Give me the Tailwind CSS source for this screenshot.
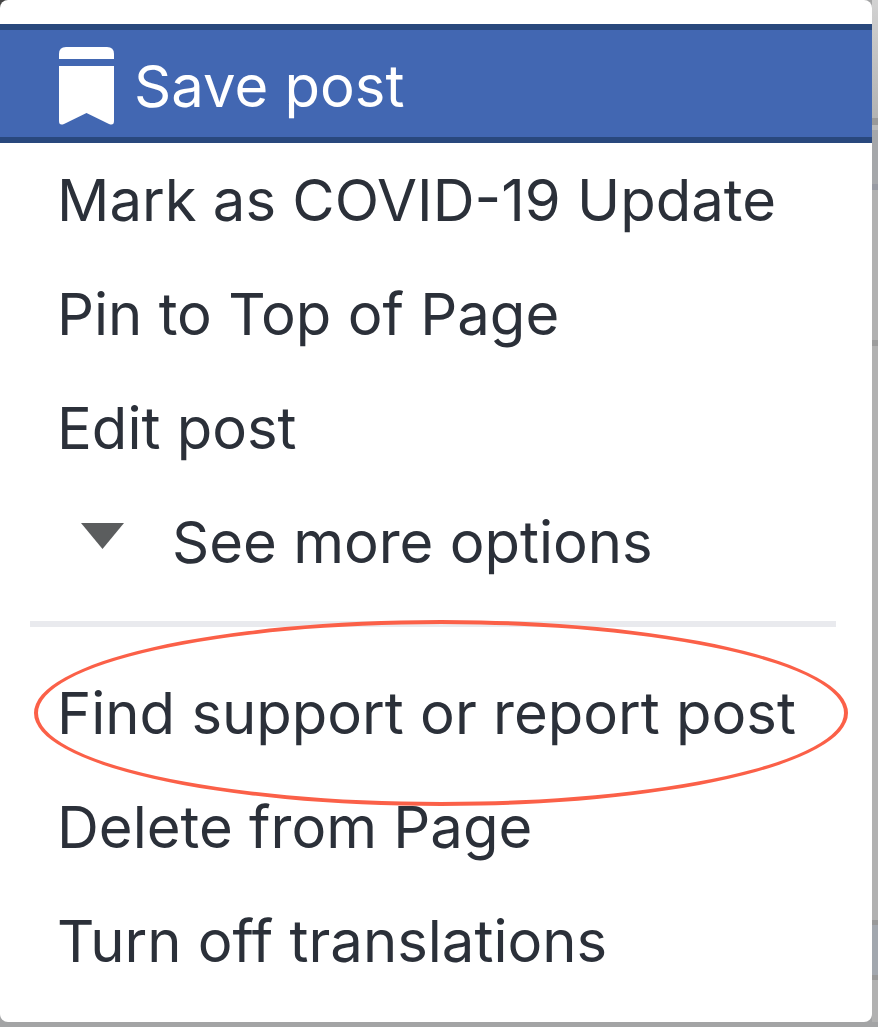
<!DOCTYPE html>
<html lang="en">
<head>
    <meta charset="UTF-8">
    <meta name="viewport" content="width=device-width, initial-scale=1.0">
    <title>Post options</title>
    <script src="https://cdn.jsdelivr.net/npm/@tailwindcss/browser@4"></script>
</head>
<body class="flex min-h-screen flex-col overflow-x-hidden bg-[#a3a4a5] font-['Inter','Liberation_Sans',sans-serif] text-[58px] leading-none text-[#2b3039]">
    <!-- Page corner behind the menu -->
    <div class="absolute top-0 left-0 h-2 w-2 rounded-br-full bg-[#444444]"></div>

    <div class="flex">
        <!-- Post menu -->
        <main class="relative flex min-w-0 grow flex-col rounded-lg bg-white pt-6 pb-6">
            <button type="button" class="flex h-[119px] items-center border-t-[6px] border-b-[6px] border-[#29487d] bg-[#4267b2] pt-1 pl-[59px] text-left text-white">
                <svg class="mr-5 h-[79px] w-[55px] shrink-0" viewBox="0 0 55 79" fill="currentColor" aria-hidden="true">
                    <path d="M0 13V8Q0 1 7 1H48Q55 1 55 8V13Z"/>
                    <path d="M0 20H55V75Q55 80 50 78L27.500 67L5 78Q0 80 0 75Z"/>
                </svg>
                <span class="whitespace-nowrap">Save post</span>
            </button>
            <button type="button" class="flex h-[114px] items-center pl-[57px] text-left whitespace-nowrap">Mark as COVID-19 Update</button>
            <button type="button" class="flex h-[114px] items-center pl-[57px] text-left whitespace-nowrap">Pin to Top of Page</button>
            <button type="button" class="flex h-[114px] items-center pl-[57px] text-left whitespace-nowrap">Edit post</button>
            <button type="button" class="flex h-[114px] items-center pl-[81px] text-left whitespace-nowrap">
                <svg class="mr-12 mb-3 h-[26px] w-[43px] shrink-0" viewBox="0 0 43 26" fill="#5b5d5e" aria-hidden="true">
                    <path d="M0 0H43L21.500 26Z"/>
                </svg>
                <span>See more options</span>
            </button>

            <hr class="mt-[22px] mr-9 mb-[29px] ml-[30px] h-[6px] border-0 bg-[#e9eaee]">

            <button type="button" class="relative flex h-[114px] items-center pl-[57px] text-left whitespace-nowrap">
                Find support or report post
                <!-- Highlight ring -->
                <span class="absolute -top-9 right-6 -bottom-9 left-[34px] rounded-[50%] border-4 border-[#fb6048]"></span>
            </button>
            <button type="button" class="flex h-[114px] items-center pl-[57px] text-left whitespace-nowrap">Delete from Page</button>
            <button type="button" class="flex h-[114px] items-center pl-[57px] text-left whitespace-nowrap">Turn off translations</button>
        </main>

        <!-- Edge of the feed next to the menu -->
        <div class="flex w-[6px] shrink-0 flex-col bg-[#b1b1b1]">
            <div class="h-[118px] bg-linear-to-b from-[#d2d2d2] to-[#b3b3b3]"></div>
            <div class="h-[7px] bg-[#999999]"></div>
            <div class="h-[5px] bg-[#b8b8b8]"></div>
            <div class="h-[54px] bg-[#a5a7aa]"></div>
            <div class="h-[6px] bg-[#989ba3]"></div>
            <div class="h-[150px]"></div>
            <div class="h-[6px] bg-[#9d9d9d]"></div>
            <div class="grow"></div>
            <div class="h-[5px] bg-[#999999]"></div>
            <div class="h-[50px] bg-[#a2a7ae]"></div>
            <div class="h-[5px] bg-[#999999]"></div>
            <div class="h-[42px]"></div>
        </div>
    </div>
</body>
</html>
